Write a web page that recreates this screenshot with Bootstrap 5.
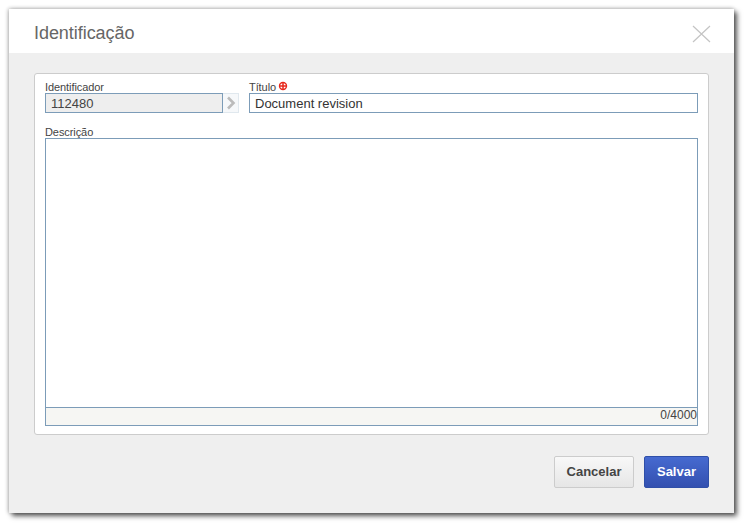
<!DOCTYPE html>
<html lang="pt">
<head>
<meta charset="utf-8">
<title>Identificação</title>
<link href="https://cdn.jsdelivr.net/npm/bootstrap@5.3.0/dist/css/bootstrap.min.css" rel="stylesheet">
<style>
html,body{height:523px;overflow:hidden;background:#fff}
body{padding:9px 10px 10px 9px;font-family:"Liberation Sans",Arial,sans-serif;color:#333}
.dlg{width:725px;height:504px;background:#efefef;box-shadow:3px 3px 5px rgba(0,0,0,.65),-1px 0 4px rgba(0,0,0,.2),0 -1px 4px rgba(0,0,0,.12)}
.dlg-head{height:44px;background:#fff;padding:4px 22px 0 25px}
.dlg-title{font-size:18px;color:#666;line-height:1;margin:0;font-weight:400;letter-spacing:-.05px}
.dlg-x{width:20px;height:20px;border:0;padding:0;background:none;display:block;margin-top:-4px}
.dlg-main{padding:20px 25px 0;height:402px}
.pnl{height:362px;background:#fff;border:1px solid #ccc;border-radius:3px;padding:0 10px}
.fld-lbl{font-size:11px;line-height:13px;color:#444;height:13px;margin-bottom:-1px;display:flex;align-items:center;gap:2px;letter-spacing:-.08px}
.row-top{padding-top:7px}
.id-col{width:194px;margin-right:10px}
.id-in{width:178px;height:20px;background:#eee;border:1px solid #7c9cb8;font-size:13px;line-height:20px;padding:0 5px;color:#444}
.id-arrow{width:16px;height:20px;background:#f6f8fa;border:1px solid #e0e8ee;border-left:0;display:flex;align-items:center;justify-content:center}
.ti-in{height:20px;background:#fff;border:1px solid #7c9cb8;font-size:13px;line-height:20px;padding:0 5px;color:#333}
.desc-lbl{margin-top:13px}
.desc-box{width:653px;height:288px;border:1px solid #7c9cb8}
.desc-body{height:269px;background:#fff;border-bottom:1px solid #7c9cb8}
.desc-count{height:17px;background:#f6f6f3;font-size:12px;line-height:14px;text-align:right;color:#444}
.req{margin-top:-3px}
.dlg-foot{padding:1px 25px 0;gap:10px;justify-content:flex-end}
.bt-c,.bt-s{height:32px;font-size:13px;font-weight:700;border-radius:2px;padding:0;font-family:"Liberation Sans",Arial,sans-serif}
.bt-c{width:80px;color:#444;border:1px solid #ccc;background:linear-gradient(#f8f8f8,#e6e6e6)}
.bt-s{width:65px;color:#fff;border:1px solid #2f4fa8;background:linear-gradient(#466ad0,#3350b0)}
</style>
</head>
<body>
<div class="dlg">
  <div class="dlg-head d-flex align-items-center justify-content-between">
    <h1 class="dlg-title">Identificação</h1>
    <button class="dlg-x" type="button" aria-label="Fechar">
      <svg width="20" height="20" viewBox="0 0 20 20"><path d="M1 2 L18 18 M18 2 L1 18" stroke="#c4c4c4" stroke-width="1.2" fill="none"/></svg>
    </button>
  </div>
  <div class="dlg-main">
    <div class="pnl">
      <div class="d-flex row-top">
        <div class="id-col">
          <div class="fld-lbl">Identificador</div>
          <div class="d-flex">
            <div class="id-in">112480</div>
            <div class="id-arrow"><svg width="10" height="14" viewBox="0 0 10 14"><path d="M2 1.5 L7.5 7 L2 12.5" stroke="#bbb" stroke-width="2.6" fill="none"/></svg></div>
          </div>
        </div>
        <div class="flex-grow-1">
          <div class="fld-lbl">Título<svg class="req" width="10" height="10" viewBox="0 0 10 10"><circle cx="5" cy="5" r="4.2" fill="#e8281c"/><circle cx="5" cy="5" r="2.8" fill="#fff"/><path d="M5 1V9M1 5H9" stroke="#e8281c" stroke-width="1.5"/></svg></div>
          <div class="ti-in">Document revision</div>
        </div>
      </div>
      <div class="fld-lbl desc-lbl">Descrição</div>
      <div class="desc-box">
        <div class="desc-body"></div>
        <div class="desc-count">0/4000</div>
      </div>
    </div>
  </div>
  <div class="d-flex dlg-foot">
    <button class="btn bt-c" type="button">Cancelar</button>
    <button class="btn bt-s" type="button">Salvar</button>
  </div>
</div>
<script src="https://cdn.jsdelivr.net/npm/bootstrap@5.3.0/dist/js/bootstrap.bundle.min.js"></script>
</body>
</html>
